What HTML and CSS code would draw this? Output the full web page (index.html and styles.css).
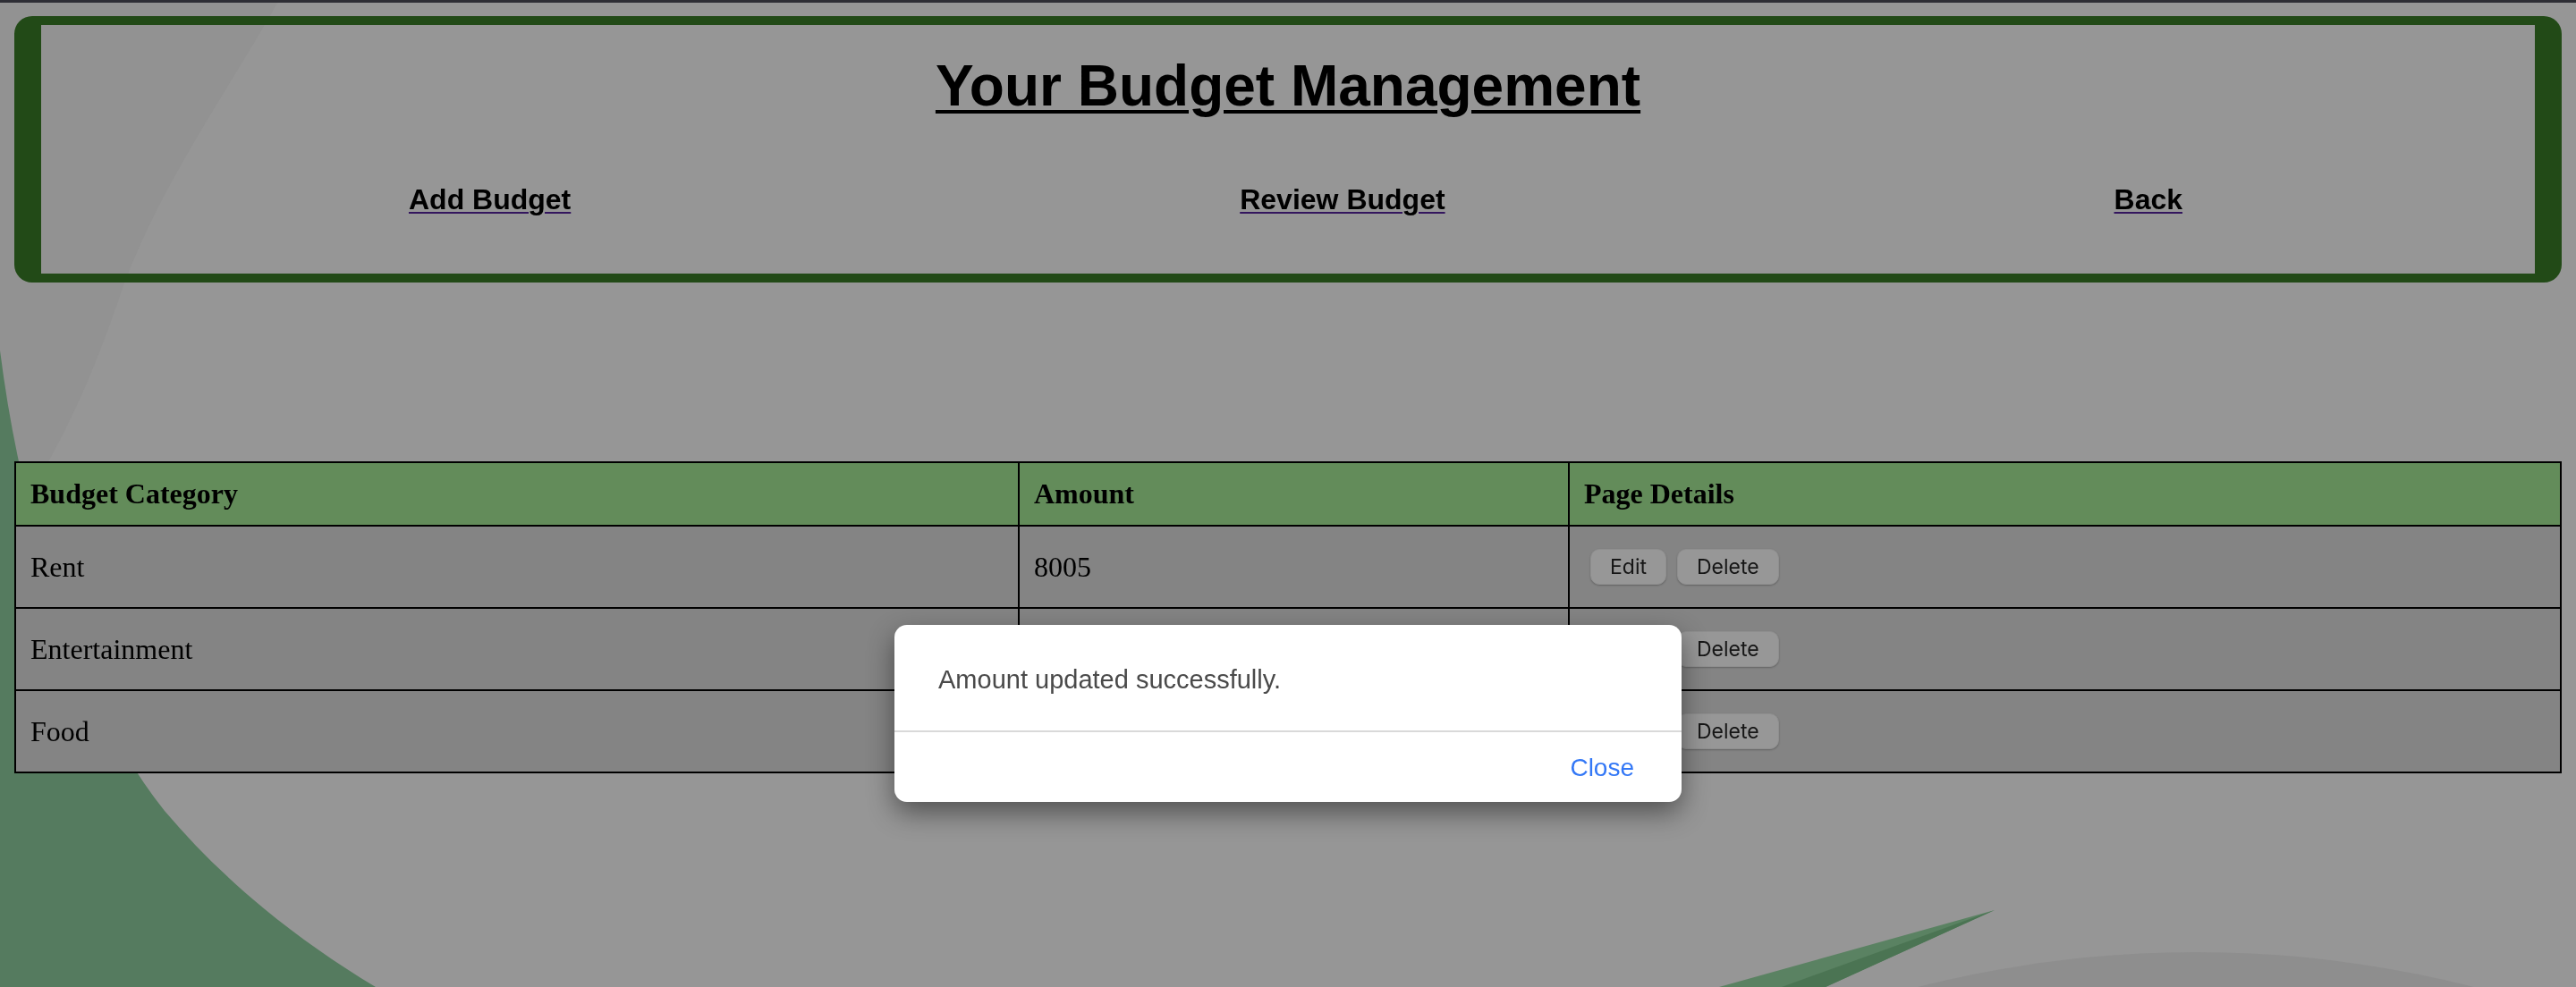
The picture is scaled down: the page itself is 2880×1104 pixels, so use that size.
FILE: index.html
```html
<!DOCTYPE html>
<html lang="en">
<head>
<meta charset="utf-8">
<title>Your Budget Management</title>
<link rel="stylesheet" href="styles.css">
</head>
<body>
<div class="top-strip"></div>
<svg class="backdrop-art" viewBox="0 0 2880 1104" preserveAspectRatio="none" aria-hidden="true">
  <rect x="0" y="0" width="2880" height="1104" fill="#969696"/>
  <path d="M0,0 L312,0 C250,110 170,220 131,340 C100,430 60,520 0,600 Z" fill="#929292"/>
  <circle cx="2455" cy="2324" r="1259" fill="#8e8e8e"/>
  <path d="M0,392 C25,590 90,790 184,907 C250,985 330,1050 420,1104 L0,1104 Z" fill="#557b5f"/>
  <path d="M2230,1018 L2041,1104 L1922,1104 Z" fill="#5a8262"/>
  <path d="M2230,1018 L2041,1104 L1992,1104 Z" fill="#4b7453"/>
</svg>

<header class="banner">
  <h1 class="title">Your Budget Management</h1>
  <nav class="nav">
    <a class="nav-link" href="#">Add Budget</a>
    <a class="nav-link" href="#">Review Budget</a>
    <a class="nav-link" href="#">Back</a>
  </nav>
</header>

<table class="budget">
  <colgroup>
    <col class="col-cat">
    <col class="col-amt">
    <col class="col-det">
  </colgroup>
  <thead>
    <tr><th>Budget Category</th><th>Amount</th><th>Page Details</th></tr>
  </thead>
  <tbody>
    <tr>
      <td>Rent</td><td>8005</td>
      <td><div class="actions"><button class="btn">Edit</button><button class="btn">Delete</button></div></td>
    </tr>
    <tr>
      <td>Entertainment</td><td>500</td>
      <td><div class="actions"><button class="btn">Edit</button><button class="btn">Delete</button></div></td>
    </tr>
    <tr>
      <td>Food</td><td>300</td>
      <td><div class="actions"><button class="btn">Edit</button><button class="btn">Delete</button></div></td>
    </tr>
  </tbody>
</table>

<div class="modal" role="dialog">
  <div class="modal-body">Amount updated successfully.</div>
  <div class="modal-footer"><button class="modal-close">Close</button></div>
</div>
</body>
</html>
```

FILE: styles.css
```css
html, body {
  margin: 0;
  height: 100%;
}
body {
  padding: 18px 16px 0;
  box-sizing: border-box;
  font-family: "Liberation Sans", Arial, sans-serif;
  color: #000;
  overflow: hidden;
  position: relative;
}
.top-strip {
  position: fixed;
  left: 0;
  top: 0;
  width: 100%;
  height: 3px;
  background: #2e2e35;
  z-index: 5;
}
.backdrop-art {
  position: fixed;
  left: 0;
  top: 0;
  width: 2880px;
  height: 1104px;
  z-index: -1;
}
.banner {
  border-style: solid;
  border-color: #224a17;
  border-width: 10px 30px;
  border-radius: 20px;
  text-align: center;
  padding: 31px 0 64px;
}
.title {
  margin: 0;
  font-size: 64px;
  line-height: 74px;
  font-weight: bold;
  text-decoration: underline;
  text-decoration-thickness: 4px;
  text-underline-offset: 5px;
}
.nav {
  margin-top: 72px;
  display: flex;
  justify-content: space-around;
  padding: 0 20px 0 37px;
}
.nav-link {
  font-size: 32px;
  line-height: 37px;
  font-weight: bold;
  color: #000;
  text-decoration: underline;
  text-decoration-color: #33155e;
  text-decoration-thickness: 2px;
  text-underline-offset: 3px;
}
.budget {
  margin-top: 200px;
  width: 100%;
  border-collapse: collapse;
  border: 2px solid #000;
  font-family: "Liberation Serif", "Times New Roman", serif;
  font-size: 32px;
  table-layout: fixed;
}
.col-cat { width: 1122px; }
.col-amt { width: 615px; }
.budget th,
.budget td {
  border: 2px solid #000;
  padding: 16px;
  text-align: left;
  vertical-align: middle;
  line-height: 37px;
}
.budget th {
  background: #638c5a;
  font-weight: bold;
}
.budget td {
  background: #848484;
}
.actions {
  display: flex;
  gap: 12px;
  margin: 9px 0 9px 7px;
}
.btn {
  font-family: Inter, "Liberation Sans", sans-serif;
  font-size: 23px;
  color: #161616;
  background: #979797;
  border: 1px solid #8f8f8f;
  border-radius: 10px;
  height: 40px;
  padding: 0 21px;
  box-shadow: 0 1px 2px rgba(0, 0, 0, 0.25);
}
.modal {
  position: fixed;
  left: 1000px;
  top: 699px;
  width: 880px;
  background: #fff;
  border-radius: 14px;
  box-shadow: 0 12px 30px rgba(0, 0, 0, 0.45);
  overflow: hidden;
}
.modal-body {
  padding: 45px 48px 40px 49px;
  font-size: 29px;
  line-height: 33px;
  color: #4a4a4a;
  border-bottom: 2px solid #d9d9d9;
}
.modal-footer {
  display: flex;
  justify-content: flex-end;
  padding: 24px 53px 22px;
}
.modal-close {
  font-family: "Liberation Sans", Arial, sans-serif;
  font-size: 28px;
  line-height: 32px;
  color: #3478f6;
  background: none;
  border: 0;
  padding: 0;
}
```
